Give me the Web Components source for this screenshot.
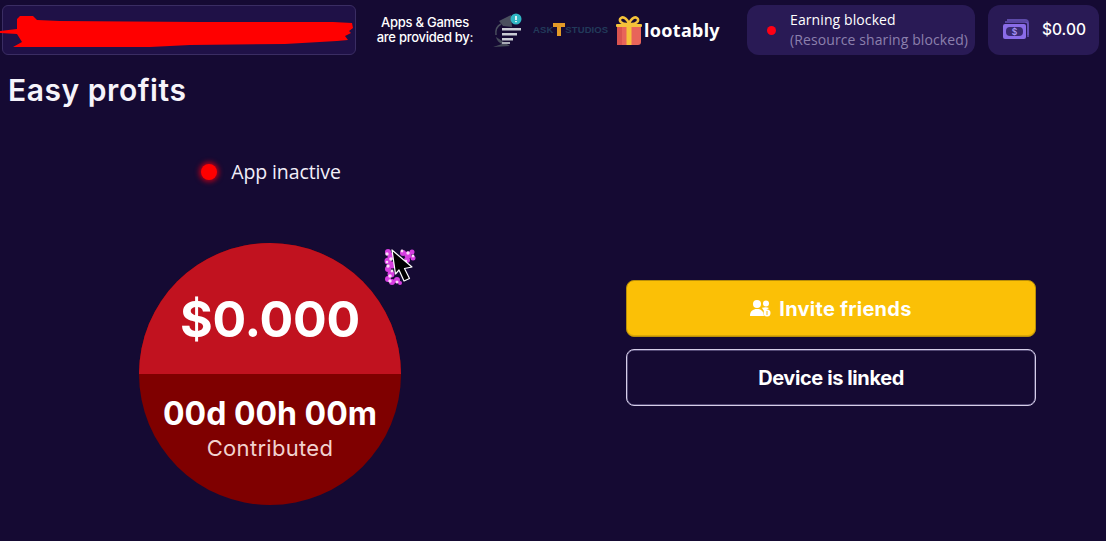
<!DOCTYPE html>
<html lang="en"><head><meta charset="utf-8"><title>Easy profits</title>
<style>
html,body{margin:0;padding:0;background:#150a33;height:100%;overflow:hidden}
body{font-family:Inter,"Liberation Sans",sans-serif;color:#fff}
</style></head><body>
<profit-app></profit-app>
<script>
function el(name, css, html){
  customElements.define(name, class extends HTMLElement{
    constructor(){super();this.attachShadow({mode:'open'}).innerHTML='<style>'+css+'</style>'+html;}
  });
}
el('account-box',`:host{display:block;position:relative;width:354px;height:50px;box-sizing:border-box;background:#1f1147;border:1px solid #3a2d63;border-radius:6px}
svg{position:absolute;left:-3px;top:-6px;width:360px;height:60px;overflow:visible}`,
`<svg viewBox="0 0 360 60"><path fill="#ff0000" d="M0 31 L17 29 L17 19 L20 16 L33 16 L37 20 L60 21 L200 22 L333 22 L352 23 L353 28 L349 31 L351 33 L345 36 L348 40 L337 41 L285 44 L190 45 L150 47 L13 47 L22 42 L17 34 L0 33Z"/></svg>`);
el('provider-strip',`:host{display:flex;align-items:center;height:50px;margin-left:19px;color:#fff}
.t{width:100px;text-align:center;font:500 13px/15.5px Inter,sans-serif;letter-spacing:-.27px;margin-right:17px}
.a{width:36px;height:34px;flex:none;margin-left:-2px}
.b{display:flex;align-items:center;width:78px;margin-left:7px;font:700 9.5px/1 "Liberation Sans",sans-serif;color:#223a5a;white-space:nowrap;letter-spacing:.1px}
.b svg{flex:none;width:12px;height:13px;margin:0 0 2px 0}
.c{display:flex;align-items:center;margin-left:4px;font:700 18px/1 "Noto Sans",sans-serif;letter-spacing:.3px}
.c svg{width:28px;height:31px;flex:none;margin-right:1px}`,
`<div class="t">Apps &amp; Games<br>are provided by:</div>
<svg class="a" viewBox="0 0 36 34"><path d="M9 8 L21 2 L22 14 L13 13Z" fill="#4a4f5e"/><path d="M6 22 Q5 14 11 11" stroke="#4a4f5e" stroke-width="1.500" fill="none"/><path d="M6 24 Q7 29 12 31 L3 34 L20 33Z" fill="#454a59"/><rect x="12" y="15" width="19" height="2.500" fill="#c9cbd4"/><rect x="12" y="20" width="15" height="2.500" fill="#c9cbd4"/><rect x="12" y="25" width="11" height="2.500" fill="#c9cbd4"/><rect x="12" y="29" width="8" height="2" fill="#a9abb6"/><circle cx="26" cy="6" r="5.500" fill="#2fb6c4"/><rect x="25.200" y="3" width="1.600" height="4" fill="#fff"/><rect x="25.200" y="8" width="1.600" height="1.200" fill="#fff"/></svg>
<div class="b"><span>ASK</span><svg viewBox="0 0 12 13"><path d="M0 0h12v4H8v9H4V4H0z" fill="#e39a27"/></svg><span>STUDIOS</span></div>
<div class="c"><svg viewBox="0 0 28 31"><rect x="2" y="9" width="24" height="21" rx="3" fill="#e8645a"/><rect x="2" y="12" width="5" height="18" fill="#d9534f"/><rect x="11.500" y="9" width="5" height="21" fill="#f5c23a"/><path d="M14 9 C6 10 3 5 6 3 C9 1 13 5 14 9 C15 5 19 1 22 3 C25 5 22 10 14 9Z" fill="none" stroke="#f5c23a" stroke-width="2.600"/><rect x="1" y="9" width="26" height="3" rx="1" fill="#f5c23a"/></svg><span>lootably</span></div>`);
el('status-chip',`:host{display:flex;align-items:center;width:228px;height:50px;margin-left:auto;background:#291a55;border-radius:12px;box-sizing:border-box;padding-left:20px}
i{width:9px;height:9px;border-radius:50%;background:#ff0014;flex:none;margin-right:14px}
.l{font:400 14px/20px "Open Sans",sans-serif;letter-spacing:.1px;white-space:nowrap}
.d{color:#8c80ad}`,
`<i></i><div class="l"><div>Earning blocked</div><div class="d">(Resource sharing blocked)</div></div>`);
el('balance-chip',`:host{display:flex;align-items:center;width:111px;height:50px;margin-left:13px;background:#291a55;border-radius:12px;box-sizing:border-box;padding-left:14px;font:500 15.5px/1 Inter,sans-serif}
svg{width:28px;height:22px;margin-right:12px;flex:none}`,
`<svg viewBox="0 0 28 22"><path d="M5 1h18a3 3 0 0 1 3 3v12" fill="none" stroke="#5d4aa8" stroke-width="2"/><path d="M3 3h20a3 3 0 0 1 3 3v12" fill="none" stroke="#6a54bd" stroke-width="1.500"/><rect x="1" y="5" width="23" height="15" rx="2" fill="#8a6ce8"/><rect x="4" y="8" width="17" height="9" rx="4" fill="#3a2a72"/><text x="12.500" y="15.500" text-anchor="middle" font-family="Inter,sans-serif" font-size="8.500" font-weight="600" fill="#a993f5">$</text></svg><span>$0.00</span>`);
el('top-bar',`:host{display:flex;align-items:flex-start;padding:5px 7px 0 2px}`,`<slot></slot>`);
el('page-title',`:host{display:block;padding:0 0 0 8px;margin-top:17px;font:600 30px/36px Inter,sans-serif;letter-spacing:.55px;color:#f6f4fb}`,`<slot></slot>`);
el('app-status',`:host{display:flex;align-items:center;justify-content:center;gap:14px;height:28px;padding-left:2px;font:400 19.5px/28px "Open Sans",sans-serif;letter-spacing:-.1px;color:#f2eff9}
i{width:16px;height:16px;border-radius:50%;background:#ff0000;box-shadow:0 0 5px 2px #b0001a}`,`<i></i><span><slot></slot></span>`);
el('earn-dial',`:host{display:block;width:262px;height:262px;border-radius:50%;overflow:hidden;background:#7f0000;color:#fff;text-align:center}
.top{height:131px;background:#c1121f;box-sizing:border-box;padding-top:44px;font:700 50px/64px Inter,sans-serif;letter-spacing:-.2px}
.time{margin-top:20px;font:700 32px/40px Inter,sans-serif;letter-spacing:0}
.sub{font:400 22px/29px Inter,sans-serif;color:#f1d2cf;letter-spacing:.3px}`,
`<div class="top">$0.000</div><div class="time">00d 00h 00m</div><div class="sub">Contributed</div>`);
el('spark-cursor',`:host{position:absolute;left:384px;top:247px;width:34px;height:40px}svg{display:block}`,
`<svg width="34" height="40" viewBox="0 0 34 40"><g fill="#d63de0"><circle cx="4" cy="5" r="3"/><circle cx="7" cy="9" r="3.500"/><circle cx="4" cy="14" r="3.500"/><circle cx="8" cy="18" r="3.500"/><circle cx="4" cy="22" r="3"/><circle cx="7" cy="27" r="3.500"/><circle cx="4" cy="32" r="3"/><circle cx="8" cy="35" r="3"/><circle cx="13" cy="33" r="3"/><circle cx="16" cy="36" r="2"/><circle cx="19" cy="6" r="3"/><circle cx="24" cy="8" r="3.500"/><circle cx="28" cy="5" r="2.500"/><circle cx="29" cy="11" r="2.500"/><circle cx="23" cy="13" r="3"/><circle cx="14" cy="13" r="3"/></g><g fill="#fbd8f8"><circle cx="3" cy="7" r="1.700"/><circle cx="7" cy="12" r="1.800"/><circle cx="3" cy="15" r="1.300"/><circle cx="4" cy="19" r="1.700"/><circle cx="8" cy="24" r="1.400"/><circle cx="6" cy="29" r="1.800"/><circle cx="6" cy="34" r="1.700"/><circle cx="13" cy="35" r="1.500"/><circle cx="24" cy="6" r="1.700"/><circle cx="29" cy="9" r="1.400"/><circle cx="18" cy="4" r="1.400"/><circle cx="22" cy="14" r="1.200"/></g><path d="M8 3 L11.500 27 L15 23 L20 34 L25.500 31.500 L20.500 21.500 L28 20 Z" fill="#000" stroke="#fff" stroke-width="1.200" stroke-linejoin="round"/></svg>`);
el('action-button',`:host{display:flex;align-items:center;justify-content:center;box-sizing:border-box;width:410px;height:57px;border-radius:8px;font:700 20px/1 Inter,sans-serif;letter-spacing:-.4px;color:#fff;gap:8px;background:transparent;border:1px solid #d5cee8;box-shadow:inset 0 0 0 .5px #8f86b5;padding-top:1px}
:host([primary]){background:#fbc006;border:1px solid #b98e08;box-shadow:inset 0 -1px 0 #dba706;letter-spacing:.25px;padding-top:0}`,
`<slot name="icon"></slot><slot></slot>`);
el('dial-column',`:host{display:flex;flex-direction:column;align-items:center;width:540px;flex:none;padding-top:50px}
.s{height:57px;flex:none}`,`<slot name="status"></slot><div class="s"></div><slot name="dial"></slot>`);
el('action-column',`:host{display:flex;flex-direction:column;align-items:center;gap:12px;flex:1;margin-left:16px;padding-top:172px}`,`<slot></slot>`);
el('main-area',`:host{display:flex}`,`<slot></slot>`);
el('profit-app',`:host{display:block;position:relative;width:1106px;height:541px}`,
`<top-bar><account-box></account-box><provider-strip></provider-strip><status-chip></status-chip><balance-chip></balance-chip></top-bar>
<page-title>Easy profits</page-title>
<main-area>
<dial-column><app-status slot="status">App inactive</app-status><earn-dial slot="dial"></earn-dial></dial-column>
<action-column>
<action-button primary><svg slot="icon" width="21" height="17" viewBox="0 0 21 17"><circle cx="7" cy="4" r="4" fill="#fff"/><circle cx="16" cy="3.500" r="3" fill="#fff"/><path d="M0 16 C0 11 3 9 7 9 C11 9 13 11 13.500 14 L14 16Z" fill="#fff"/><path d="M12 8 C14 7 17 7 19 8 L15 11 L14 11Z" fill="#fff"/><circle cx="17" cy="13" r="3.500" fill="#fff"/><path d="M17 11v4" stroke="#fbc006" stroke-width="1"/></svg>Invite friends</action-button>
<action-button>Device is linked</action-button>
</action-column>
</main-area>
<spark-cursor></spark-cursor>`);
</script>
</body></html>
